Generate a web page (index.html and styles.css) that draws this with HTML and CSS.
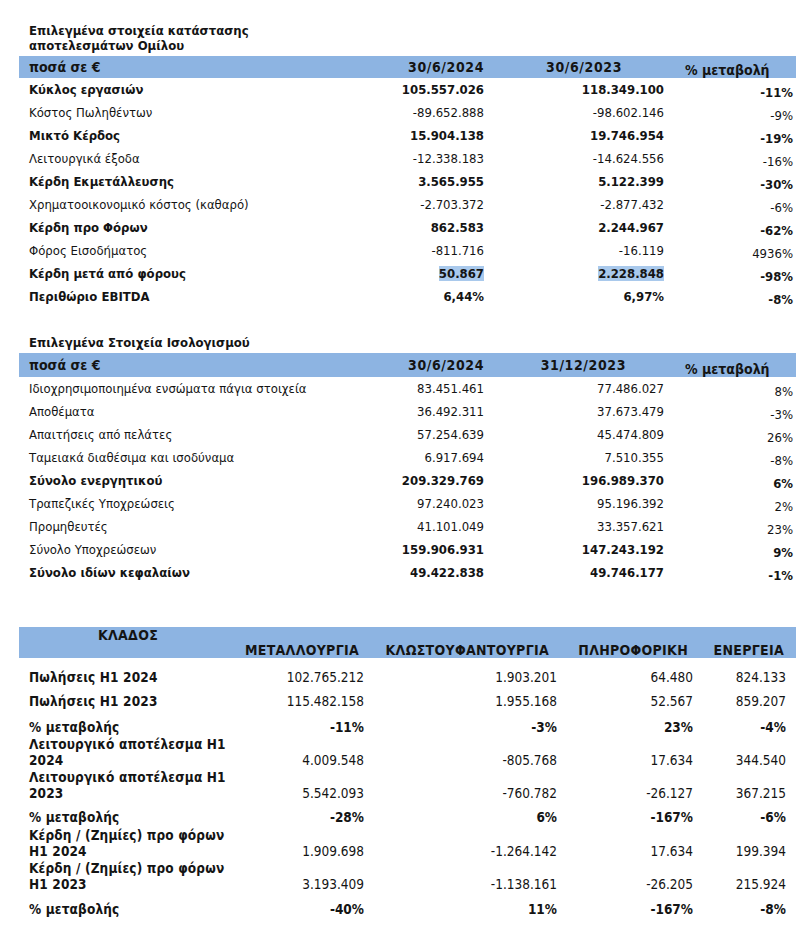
FILE: index.html
```html
<!DOCTYPE html>
<html lang="el">
<head>
<meta charset="utf-8">
<title>Οικονομικά στοιχεία</title>
<link rel="stylesheet" href="styles.css">
</head>
<body>
<div class="page">

  <section class="block block-results">
    <h2 class="title narrow">Επιλεγμένα στοιχεία κατάστασης αποτελεσμάτων Ομίλου</h2>
    <table class="fin">
      <colgroup><col class="c-label"><col class="c-a"><col class="c-b"><col class="c-p"></colgroup>
      <thead>
        <tr class="band">
          <th class="lab">ποσά σε €</th>
          <th class="h-a date">30/6/2024</th>
          <th class="h-b date">30/6/2023</th>
          <th class="h-p">% μεταβολή</th>
        </tr>
      </thead>
      <tbody>
        <tr class="b"><td class="lab">Κύκλος εργασιών</td><td class="num">105.557.026</td><td class="num">118.349.100</td><td class="pct">-11%</td></tr>
        <tr><td class="lab">Κόστος Πωληθέντων</td><td class="num">-89.652.888</td><td class="num">-98.602.146</td><td class="pct">-9%</td></tr>
        <tr class="b"><td class="lab">Μικτό Κέρδος</td><td class="num">15.904.138</td><td class="num">19.746.954</td><td class="pct">-19%</td></tr>
        <tr><td class="lab">Λειτουργικά έξοδα</td><td class="num">-12.338.183</td><td class="num">-14.624.556</td><td class="pct">-16%</td></tr>
        <tr class="b"><td class="lab">Κέρδη Εκμετάλλευσης</td><td class="num">3.565.955</td><td class="num">5.122.399</td><td class="pct">-30%</td></tr>
        <tr><td class="lab">Χρηματοοικονομικό κόστος (καθαρό)</td><td class="num">-2.703.372</td><td class="num">-2.877.432</td><td class="pct">-6%</td></tr>
        <tr class="b"><td class="lab">Κέρδη προ Φόρων</td><td class="num">862.583</td><td class="num">2.244.967</td><td class="pct">-62%</td></tr>
        <tr><td class="lab">Φόρος Εισοδήματος</td><td class="num">-811.716</td><td class="num">-16.119</td><td class="pct">4936%</td></tr>
        <tr class="b"><td class="lab">Κέρδη μετά από φόρους</td><td class="num"><span class="hl">50.867</span></td><td class="num"><span class="hl">2.228.848</span></td><td class="pct">-98%</td></tr>
        <tr class="b"><td class="lab">Περιθώριο EBITDA</td><td class="num">6,44%</td><td class="num">6,97%</td><td class="pct">-8%</td></tr>
      </tbody>
    </table>
  </section>

  <section class="block block-balance">
    <h2 class="title">Επιλεγμένα Στοιχεία Ισολογισμού</h2>
    <table class="fin fin2">
      <colgroup><col class="c-label"><col class="c-a"><col class="c-b"><col class="c-p"></colgroup>
      <thead>
        <tr class="band">
          <th class="lab">ποσά σε €</th>
          <th class="h-a date">30/6/2024</th>
          <th class="h-b2 date">31/12/2023</th>
          <th class="h-p">% μεταβολή</th>
        </tr>
      </thead>
      <tbody>
        <tr><td class="lab">Ιδιοχρησιμοποιημένα ενσώματα πάγια στοιχεία</td><td class="num">83.451.461</td><td class="num">77.486.027</td><td class="pct">8%</td></tr>
        <tr><td class="lab">Αποθέματα</td><td class="num">36.492.311</td><td class="num">37.673.479</td><td class="pct">-3%</td></tr>
        <tr><td class="lab">Απαιτήσεις από πελάτες</td><td class="num">57.254.639</td><td class="num">45.474.809</td><td class="pct">26%</td></tr>
        <tr><td class="lab">Ταμειακά διαθέσιμα και ισοδύναμα</td><td class="num">6.917.694</td><td class="num">7.510.355</td><td class="pct">-8%</td></tr>
        <tr class="b"><td class="lab">Σύνολο ενεργητικού</td><td class="num">209.329.769</td><td class="num">196.989.370</td><td class="pct">6%</td></tr>
        <tr><td class="lab">Τραπεζικές Υποχρεώσεις</td><td class="num">97.240.023</td><td class="num">95.196.392</td><td class="pct">2%</td></tr>
        <tr><td class="lab">Προμηθευτές</td><td class="num">41.101.049</td><td class="num">33.357.621</td><td class="pct">23%</td></tr>
        <tr class="bv"><td class="lab">Σύνολο Υποχρεώσεων</td><td class="num">159.906.931</td><td class="num">147.243.192</td><td class="pct">9%</td></tr>
        <tr class="b"><td class="lab">Σύνολο ιδίων κεφαλαίων</td><td class="num">49.422.838</td><td class="num">49.746.177</td><td class="pct">-1%</td></tr>
      </tbody>
    </table>
  </section>

  <section class="block block-sectors">
    <table class="sect">
      <colgroup><col class="s-label"><col class="s-1"><col class="s-2"><col class="s-3"><col class="s-4"></colgroup>
      <thead>
        <tr class="band sband">
          <th class="klados">ΚΛΑΔΟΣ</th>
          <th class="sh sh1">ΜΕΤΑΛΛΟΥΡΓΙΑ</th>
          <th class="sh sh2">ΚΛΩΣΤΟΥΦΑΝΤΟΥΡΓΙΑ</th>
          <th class="sh sh3">ΠΛΗΡΟΦΟΡΙΚΗ</th>
          <th class="sh sh4">ΕΝΕΡΓΕΙΑ</th>
        </tr>
      </thead>
      <tbody>
        <tr class="r-first"><td class="slab">Πωλήσεις Η1 2024</td><td class="sv v1">102.765.212</td><td class="sv v2">1.903.201</td><td class="sv v3">64.480</td><td class="sv v4">824.133</td></tr>
        <tr class="r-24"><td class="slab">Πωλήσεις Η1 2023</td><td class="sv v1">115.482.158</td><td class="sv v2">1.955.168</td><td class="sv v3">52.567</td><td class="sv v4">859.207</td></tr>
        <tr class="r-26 sb"><td class="slab">% μεταβολής</td><td class="sv v1">-11%</td><td class="sv v2">-3%</td><td class="sv v3">23%</td><td class="sv v4">-4%</td></tr>
        <tr class="r-33"><td class="slab">Λειτουργικό αποτέλεσμα Η1<br>2024</td><td class="sv v1">4.009.548</td><td class="sv v2">-805.768</td><td class="sv v3">17.634</td><td class="sv v4">344.540</td></tr>
        <tr class="r-32"><td class="slab">Λειτουργικό αποτέλεσμα Η1<br>2023</td><td class="sv v1">5.542.093</td><td class="sv v2">-760.782</td><td class="sv v3">-26.127</td><td class="sv v4">367.215</td></tr>
        <tr class="r-24 sb"><td class="slab">% μεταβολής</td><td class="sv v1">-28%</td><td class="sv v2">6%</td><td class="sv v3">-167%</td><td class="sv v4">-6%</td></tr>
        <tr class="r-34"><td class="slab">Κέρδη / (Ζημίες) προ φόρων<br>Η1 2024</td><td class="sv v1">1.909.698</td><td class="sv v2">-1.264.142</td><td class="sv v3">17.634</td><td class="sv v4">199.394</td></tr>
        <tr class="r-33"><td class="slab">Κέρδη / (Ζημίες) προ φόρων<br>Η1 2023</td><td class="sv v1">3.193.409</td><td class="sv v2">-1.138.161</td><td class="sv v3">-26.205</td><td class="sv v4">215.924</td></tr>
        <tr class="r-25 sb"><td class="slab">% μεταβολής</td><td class="sv v1">-40%</td><td class="sv v2">11%</td><td class="sv v3">-167%</td><td class="sv v4">-8%</td></tr>
      </tbody>
    </table>
  </section>

</div>
</body>
</html>
```

FILE: styles.css
```css
html, body {
  margin: 0;
  padding: 0;
  background: #ffffff;
}

body {
  font-family: "DejaVu Sans Condensed", "DejaVu Sans", "Liberation Sans", sans-serif;
  font-size: 13px;
  color: #141414;
}

.page {
  padding: 23px 16px 0 19px;
  width: 777px;
}

.title {
  margin: 0 0 3px 0;
  padding-left: 10px;
  font-size: 13px;
  font-weight: bold;
  line-height: 15px;
}

.title.narrow {
  width: 240px;
}

.block-balance {
  margin-top: 27px;
}

.block-sectors {
  margin-top: 43px;
}

table {
  border-collapse: collapse;
  border-spacing: 0;
  table-layout: fixed;
  width: 777px;
}

th, td {
  padding: 0;
  white-space: nowrap;
}

.band {
  background: #8db4e2;
}

/* ---------- first two tables ---------- */
.c-label { width: 321px; }
.c-a { width: 147px; }
.c-b { width: 180px; }
.c-p { width: 129px; }

.fin .band {
  height: 22px;
}

.fin2 .band {
  height: 24px;
}

.fin th {
  font-weight: bold;
  font-size: 14px;
  vertical-align: middle;
  line-height: 16px;
}

.fin th.date {
  letter-spacing: 0.6px;
}

.fin .lab {
  text-align: left;
  padding-left: 10px;
}

.fin th.h-a {
  text-align: right;
  padding-right: 3px;
}

.fin th.h-b {
  text-align: right;
  padding-right: 45px;
}

.fin th.h-b2 {
  text-align: right;
  padding-right: 41px;
}

.fin th.h-p {
  text-align: left;
  padding-left: 18px;
  vertical-align: bottom;
  padding-bottom: 0;
}

.fin tbody tr {
  height: 23px;
}

.fin td {
  line-height: 16px;
  vertical-align: middle;
}

.fin td.num {
  text-align: right;
  padding-right: 3px;
}

.fin td.pct {
  text-align: right;
  padding-right: 3px;
  vertical-align: bottom;
}

.fin tr.b td {
  font-weight: bold;
}

.fin tr.bv td.num,
.fin tr.bv td.pct {
  font-weight: bold;
}

.hl {
  background: #a9c9ec;
}

/* ---------- sector table ---------- */
.sect {
  font-size: 13.5px;
}

.s-label { width: 201px; }
.s-1 { width: 150px; }
.s-2 { width: 193px; }
.s-3 { width: 136px; }
.s-4 { width: 97px; }

.sband {
  height: 31px;
}

.sect th {
  font-weight: bold;
  font-size: 14px;
  letter-spacing: 0.3px;
  line-height: 15px;
}

.sect th.klados {
  vertical-align: top;
  text-align: center;
  padding-top: 1px;
  padding-left: 17px;
}

.sect th.sh {
  vertical-align: bottom;
  text-align: right;
  padding-bottom: 0;
}

.sh1 { padding-right: 11px; }
.sh2 { padding-right: 14px; }
.sh3 { padding-right: 11px; }
.sh4 { padding-right: 12px; }

.sect td {
  vertical-align: bottom;
  line-height: 16px;
  padding-bottom: 1px;
}

.sect td.slab {
  font-weight: bold;
  padding-left: 10px;
  text-align: left;
  letter-spacing: 0.15px;
}

.sect td.sv {
  text-align: right;
}

.v1 { padding-right: 6px; }
.v2 { padding-right: 6px; }
.v3 { padding-right: 6px; }
.v4 { padding-right: 10px; }

.sect tr.sb td.sv {
  font-weight: bold;
}

.r-first { height: 28px; }
.r-24 { height: 24px; }
.r-25 { height: 25px; }
.r-26 { height: 26px; }
.r-32 { height: 32px; }
.r-33 { height: 33px; }
.r-34 { height: 34px; }
```
